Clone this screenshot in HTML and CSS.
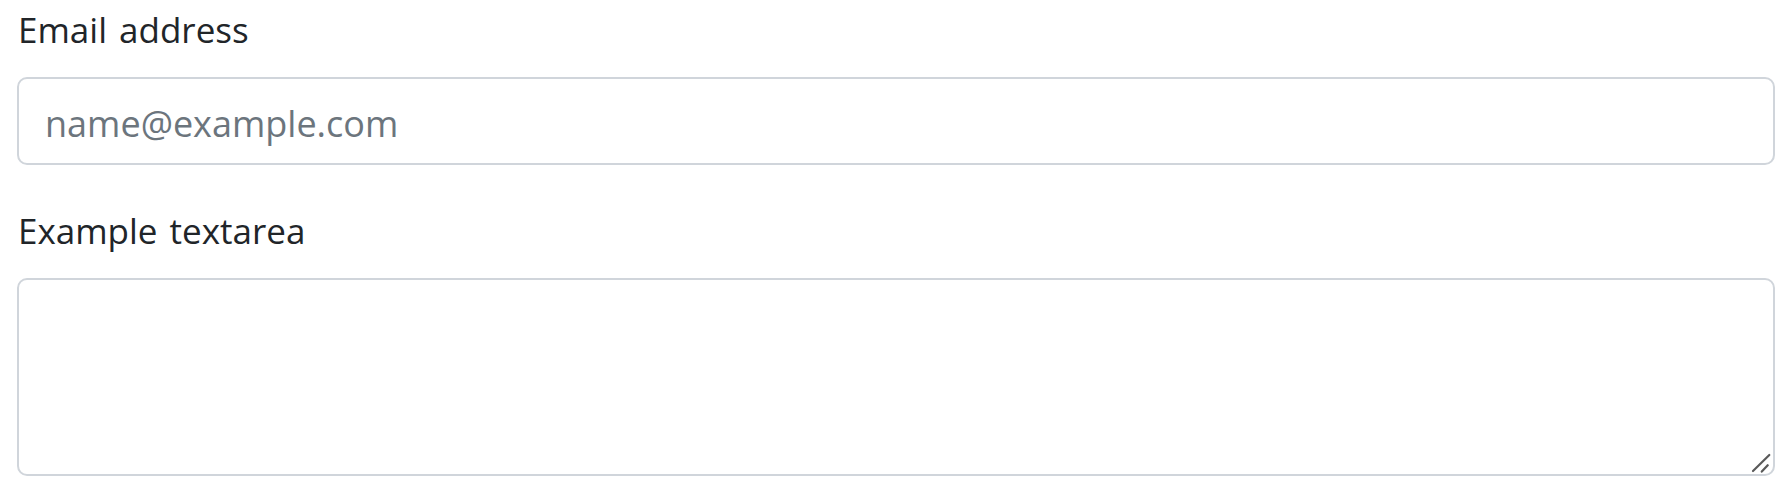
FILE: index.html
```html
<!DOCTYPE html>
<html lang="en">
<head>
<meta charset="utf-8">
<title>Form</title>
<link rel="stylesheet" href="styles.css">
</head>
<body>
<form class="form">
  <div class="field">
    <label class="label" for="email">Email address</label>
    <input class="control" type="email" id="email" placeholder="name@example.com">
  </div>
  <div class="field field-second">
    <label class="label" for="area">Example textarea</label>
    <div class="area-wrap">
      <textarea class="control area" id="area"></textarea>
      <svg class="grip" width="20" height="20" viewBox="0 0 20 20" aria-hidden="true">
        <line x1="2" y1="18" x2="18.3" y2="2" stroke="#5a5a5a" stroke-width="2.2" stroke-linecap="round"/>
        <line x1="10.8" y1="18.6" x2="16.7" y2="12.2" stroke="#5a5a5a" stroke-width="2.2" stroke-linecap="round"/>
      </svg>
    </div>
  </div>
</form>
</body>
</html>
```

FILE: styles.css
```css
html, body {
  margin: 0;
  padding: 0;
  background: #ffffff;
}

.form {
  padding: 4px 17px 0 17px;
  font-family: "Open Sans", "Noto Sans", sans-serif;
  color: #212529;
}

.field {
  display: flex;
  flex-direction: column;
}

.field-second {
  margin-top: 40px;
}

.label {
  display: block;
  font-size: 35px;
  line-height: 52px;
  height: 52px;
  margin-bottom: 21px;
  padding-left: 1px;
  word-spacing: 3px;
  color: #212529;
}

.control {
  box-sizing: border-box;
  width: 100%;
  height: 88px;
  margin: 0;
  padding: 5px 26px 0 26px;
  border: 2px solid #d0d5db;
  border-radius: 10px;
  font-family: "Open Sans", "Noto Sans", sans-serif;
  font-size: 36px;
  color: #212529;
  background: #ffffff;
  outline: none;
}

.control::placeholder {
  color: #6c757d;
  opacity: 1;
}

.area-wrap {
  position: relative;
}

.area {
  height: 198px;
  display: block;
  resize: none;
}

.grip {
  position: absolute;
  right: 4px;
  bottom: 3px;
  pointer-events: none;
}
```
